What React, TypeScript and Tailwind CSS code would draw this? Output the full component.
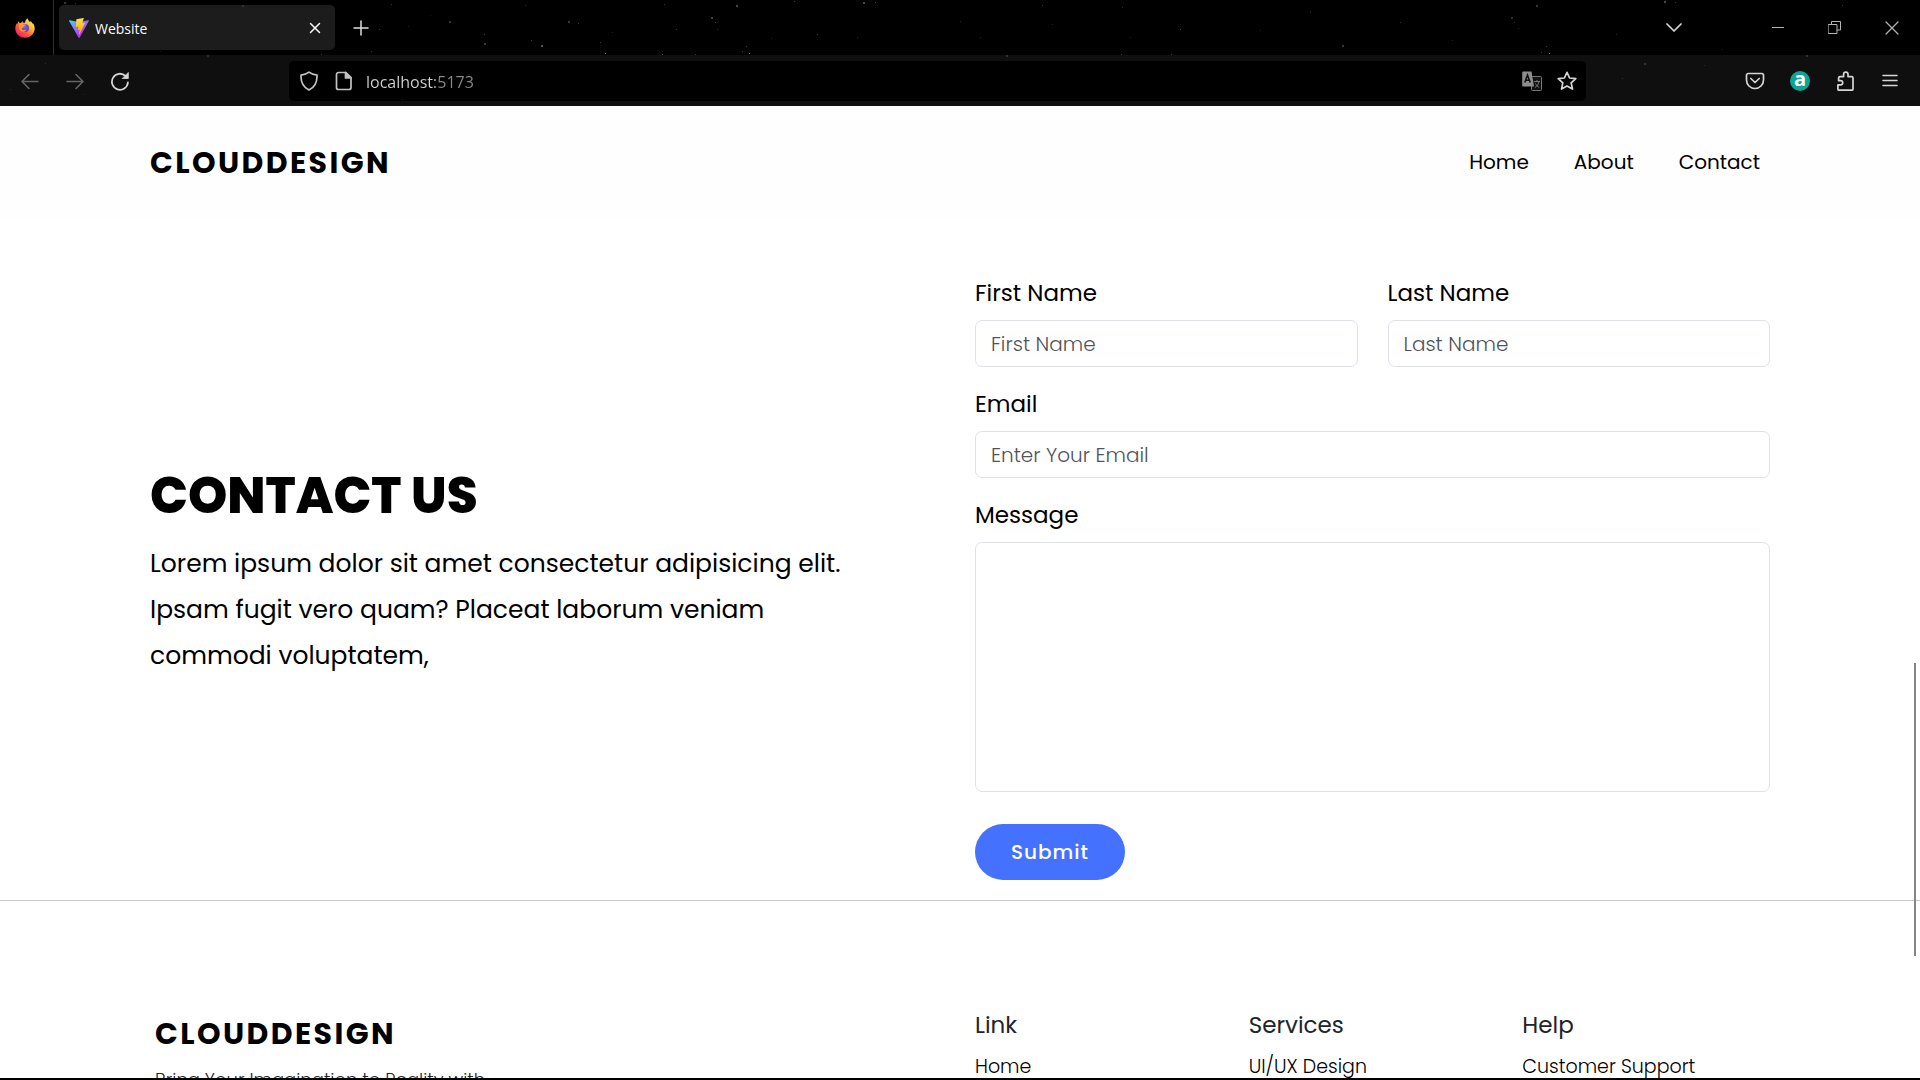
import type { ReactNode } from "react";

// x, y, size and opacity of each speck in the window theme
const stars: [number, number, number, number][] = [
  [64, 2, 2, 0.3], [75, 3, 1, 0.25], [160, 51, 1, 0.15], [207, 55, 2, 0.2], [242, 5, 2, 0.15], [321, 54, 1, 0.35],
  [379, 29, 1, 0.3], [391, 4, 1, 0.3], [408, 26, 1, 0.15], [430, 15, 1, 0.12], [449, 21, 2, 0.3], [371, 51, 1, 0.25],
  [45, 63, 1, 0.2], [10, 89, 1, 0.15], [84, 94, 1, 0.15], [402, 99, 1, 0.2],
  [484, 34, 1, 0.35], [484, 43, 2, 0.3], [525, 5, 1, 0.25], [531, 40, 1, 0.3], [541, 45, 2, 0.45], [568, 21, 2, 0.3],
  [578, 23, 1, 0.3], [600, 42, 1, 0.3], [605, 53, 1, 0.6], [612, 32, 1, 0.2], [662, 54, 1, 0.5], [664, 4, 1, 0.3],
  [676, 29, 1, 0.3], [695, 54, 1, 0.3], [711, 17, 2, 0.35], [715, 22, 1, 0.4], [717, 29, 1, 0.25], [736, 5, 2, 0.4],
  [742, 51, 1, 0.3], [746, 46, 1, 0.3], [749, 53, 1, 0.6], [771, 38, 1, 0.2], [794, 1, 1, 0.35], [817, 34, 1, 0.3],
  [857, 37, 1, 0.25], [863, 2, 2, 0.4], [875, 2, 1, 0.4], [960, 21, 1, 0.2], [980, 37, 1, 0.2], [1006, 55, 2, 0.2],
  [1042, 5, 1, 0.3], [1052, 24, 1, 0.2], [1122, 7, 1, 0.25], [1121, 54, 1, 0.4], [1130, 37, 1, 0.2], [1171, 54, 1, 0.3],
  [1180, 29, 1, 0.4], [1260, 30, 1, 0.2], [1310, 12, 1, 0.3], [1342, 45, 2, 0.3], [1400, 22, 1, 0.25], [1452, 40, 1, 0.2],
  [1511, 17, 2, 0.25], [1514, 22, 1, 0.3], [1518, 28, 1, 0.2], [1536, 5, 2, 0.3], [1541, 52, 1, 0.3], [1546, 46, 1, 0.35],
  [1549, 53, 1, 0.6], [1616, 34, 1, 0.2], [1664, 1, 2, 0.4], [1675, 2, 1, 0.3], [1722, 49, 1, 0.2], [1842, 5, 1, 0.3],
  [1644, 63, 2, 0.2], [1622, 78, 1, 0.2], [1806, 55, 2, 0.2], [1704, 65, 1, 0.15],
];

function Starfield() {
  return (
    <svg className="pointer-events-none absolute inset-0 h-full w-full" aria-hidden="true">
      {stars.map(([x, y, s, o], i) => (
        <rect key={i} x={x} y={y} width={s} height={s} fill="#b9b2ae" opacity={o} />
      ))}
    </svg>
  );
}

function FirefoxIcon() {
  return (
    <svg width="20" height="20" viewBox="0 0 20 20" aria-hidden="true">
      <defs>
        <linearGradient id="ffBody" x1="0.85" y1="0.1" x2="0.2" y2="0.95">
          <stop offset="0" stopColor="#fff14a" />
          <stop offset="0.35" stopColor="#ffb02e" />
          <stop offset="0.65" stopColor="#ff5a36" />
          <stop offset="1" stopColor="#f0187a" />
        </linearGradient>
        <radialGradient id="ffGlobe" cx="0.4" cy="0.3" r="0.8">
          <stop offset="0" stopColor="#9059ff" />
          <stop offset="1" stopColor="#5b3bb5" />
        </radialGradient>
      </defs>
      <path
        d="M12.6.2c.3 1.9 1.4 2.9 2.6 4 .2-.3.3-.9.2-1.4 1 .8 1.7 1.900 2.100 2.900.2-.1.300-.400.300-.7 1.300 1.800 1.900 3.500 1.900 5.500 0 5.100-4.200 9.300-9.600 9.300S.3 15.700.3 10.500c0-2 .5-3.700 1.500-5.200l.2 1.300c.3-1 .8-2.300 2-3.700 0 .7.100 1.300.400 1.800.5.300 1 .3 1.600.2.500-.9 1.200-1.400 2.100-1.800-.4.500-.5 1-.4 1.500l2.300.2C10.100 3.200 11 1.300 12.600.2z"
        fill="url(#ffBody)"
      />
      <circle cx="10" cy="10" r="4" fill="url(#ffGlobe)" />
      <path
        d="M4.200 6.300c1.500-.9 3-.6 4 .1l2.600.2c.1.800-1.200 1.300-1.900 1.700-.1.700-.8 1.200-1.600 1.400-1 .6-.8 2.300.9 2.500 1.200.1 1.900-.8 3.100-.3-.8 1.500-3.200 2.400-5 1.300-2.100-1.300-3-4.200-2.100-6.900z"
        fill="#ff9a2b"
      />
    </svg>
  );
}

function ViteIcon() {
  return (
    <svg width="20" height="20" viewBox="0 0 256 257" aria-hidden="true">
      <defs>
        <linearGradient id="viteA" x1="-.828%" x2="57.636%" y1="7.652%" y2="78.411%">
          <stop offset="0%" stopColor="#41D1FF" />
          <stop offset="100%" stopColor="#BD34FE" />
        </linearGradient>
        <linearGradient id="viteB" x1="43.376%" x2="50.316%" y1="2.242%" y2="89.03%">
          <stop offset="0%" stopColor="#FFEA83" />
          <stop offset="8.333%" stopColor="#FFDD35" />
          <stop offset="100%" stopColor="#FFA800" />
        </linearGradient>
      </defs>
      <path
        fill="url(#viteA)"
        d="M255.153 37.938L134.897 252.976c-2.483 4.44-8.862 4.466-11.382.048L.875 37.958c-2.746-4.814 1.371-10.646 6.827-9.67l120.385 21.517a6.537 6.537 0 0 0 2.322-.004l117.867-21.483c5.438-.991 9.574 4.796 6.877 9.62Z"
      />
      <path
        fill="url(#viteB)"
        d="M185.432.063L96.44 17.501a3.268 3.268 0 0 0-2.634 3.014l-5.474 92.456a3.268 3.268 0 0 0 3.997 3.378l24.777-5.718c2.318-.535 4.413 1.507 3.936 3.838l-7.361 36.047c-.495 2.426 1.782 4.5 4.151 3.78l15.304-4.649c2.372-.72 4.652 1.36 4.15 3.788l-11.698 56.621c-.732 3.542 3.979 5.473 5.943 2.437l1.313-2.028l72.516-144.72c1.215-2.423-.88-5.186-3.54-4.672l-25.505 4.922c-2.396.462-4.435-1.77-3.759-4.114l16.646-57.705c.677-2.35-1.37-4.583-3.769-4.113Z"
      />
    </svg>
  );
}

function Glyph({ children, size = 20, width = 1.6 }: { children: ReactNode; size?: number; width?: number }) {
  return (
    <svg
      width={size}
      height={size}
      viewBox={`0 0 ${size} ${size}`}
      fill="none"
      stroke="currentColor"
      strokeWidth={width}
      strokeLinecap="round"
      strokeLinejoin="round"
      aria-hidden="true"
    >
      {children}
    </svg>
  );
}

function BarButton({ label, children, dim = false }: { label: string; children: ReactNode; dim?: boolean }) {
  return (
    <button
      type="button"
      aria-label={label}
      className={`flex h-10 w-11 items-center justify-center ${dim ? "text-[#656565]" : "text-[#d6d6d6]"}`}
    >
      {children}
    </button>
  );
}

function WindowButton({ label, children }: { label: string; children: ReactNode }) {
  return (
    <button type="button" aria-label={label} className="flex h-[54px] w-[57px] items-center justify-center text-[#b4b4b4]">
      {children}
    </button>
  );
}

function BrowserChrome() {
  return (
    <header className="relative shrink-0 bg-black font-['Open_Sans',sans-serif]">
      <div className="flex h-[55px] items-center">
        <div className="flex h-full w-[54px] items-center border-r border-[#2e2e2e] pl-[15px]">
          <FirefoxIcon />
        </div>
        <div className="ml-[5px] flex h-[45px] w-[276px] items-center rounded-[5px] bg-[#1c1c1c] px-2.5 text-[#fbfbfe]">
          <ViteIcon />
          <span className="ml-1.5 flex-1 pt-0.5 text-[14px] leading-5">Website</span>
          <button type="button" aria-label="Close tab" className="flex size-5 items-center justify-center">
            <Glyph size={12} width={1.5}>
              <path d="M1.500 1.500 10.500 10.500M10.500 1.500 1.500 10.500" />
            </Glyph>
          </button>
        </div>
        <button type="button" aria-label="New tab" className="ml-1 flex size-11 items-center justify-center text-[#dedede]">
          <Glyph size={16} width={1.5}>
            <path d="M8 1v14M1 8h14" />
          </Glyph>
        </button>
        <div className="flex-1" />
        <button type="button" aria-label="List all tabs" className="mr-[53px] flex h-10 w-11 items-center justify-center text-[#d6d6d6]">
          <Glyph size={16} width={1.700}>
            <path d="M1 4 8 11 15 4" />
          </Glyph>
        </button>
        <WindowButton label="Minimize">
          <Glyph size={12} width={1}>
            <path d="M0 5.500h12" />
          </Glyph>
        </WindowButton>
        <WindowButton label="Restore">
          <Glyph size={13} width={1}>
            <path d="M.5 3.500h8.500v9H.5zM3.500 3.500v-3h9v8.500h-3.500" />
          </Glyph>
        </WindowButton>
        <WindowButton label="Close">
          <Glyph size={14} width={1.200}>
            <path d="M1 1 13 13M13 1 1 13" />
          </Glyph>
        </WindowButton>
      </div>

      <div className="flex h-[51px] items-center bg-[#0f0f0f] px-2">
        <div className="flex gap-px">
          <BarButton label="Back" dim>
            <Glyph>
              <path d="M18 10.500H2M9 3.500l-7 7 7 7" />
            </Glyph>
          </BarButton>
          <BarButton label="Forward" dim>
            <Glyph>
              <path d="M2 10.500h16M11 3.500l7 7-7 7" />
            </Glyph>
          </BarButton>
          <BarButton label="Reload">
            <Glyph width={1.800}>
              <path d="M17.900 11.500A8 8 0 1 1 15.500 5" />
              <path d="M18.300 1.800v5.700h-5.700z" fill="currentColor" strokeWidth={0.8} />
            </Glyph>
          </BarButton>
        </div>

        <div className="mx-[147px] flex h-10 flex-1 items-center rounded-[5px] bg-black pr-[9px] pl-2.5 text-[#c2c2c2]">
          <Glyph width={1.700}>
            <path d="M10 1.200c2.300 1.800 4.800 2.600 8 2.900.3 6.700-2.200 12-8 15-5.800-3-8.300-8.300-8-15 3.200-.3 5.700-1.100 8-2.900z" />
          </Glyph>
          <span className="ml-[15px]">
            <Glyph width={1.700}>
              <path d="M4.500 1.500h7.500l5 5v10a2 2 0 0 1-2 2H4.500a2 2 0 0 1-2-2v-13a2 2 0 0 1 2-2z" />
              <path d="M11.500 1.500v5.500H17z" fill="currentColor" />
            </Glyph>
          </span>
          <input
            aria-label="Address"
            defaultValue="localhost:5173"
            className="ml-3 h-8 min-w-0 flex-1 bg-[linear-gradient(90deg,#d4d4d4_69px,#8a8a8a_69px)] bg-clip-text pt-0.5 text-[16px] text-transparent outline-none"
          />
          <button type="button" aria-label="Translate page" className="flex items-center">
            <svg width="20" height="20" viewBox="0 0 20 20" aria-hidden="true">
              <rect x="9.500" y="5.500" width="10" height="14" rx="1" fill="#111" stroke="#777" />
              <path d="M12 10.500h6M15 9v1.500M13 16.500c2-1.200 3.500-3.200 4-6M13.500 12.500c.8 1.800 2 3 3.800 4" fill="none" stroke="#777" />
              <path d="M1 .5h8.500l2.500 15H1a.8.8 0 0 1-.8-.8V1.300A.8.800 0 0 1 1 .5z" fill="#8e8e8e" />
              <path d="M2.800 11.500 5.500 4l2.700 7.500M3.800 9.200h3.500" fill="none" stroke="#111" strokeWidth="1.600" />
            </svg>
          </button>
          <button type="button" aria-label="Bookmark this page" className="ml-[15px] flex items-center text-[#d6d6d6]">
            <Glyph width={1.700}>
              <path d="M10 1.300 12.600 7l6.200.7-4.600 4.200 1.300 6.200-5.500-3.100-5.500 3.100 1.300-6.200L1.200 7.700 7.400 7z" />
            </Glyph>
          </button>
        </div>

        <div className="flex gap-px">
          <BarButton label="Save to Pocket">
            <Glyph width={1.700}>
              <path d="M3.200 2.500h13.600a1.700 1.700 0 0 1 1.700 1.700V9a8.500 8.500 0 0 1-17 0V4.200a1.700 1.700 0 0 1 1.700-1.700z" />
              <path d="M5.800 7.500 10 11.500l4.200-4" />
            </Glyph>
          </BarButton>
          <BarButton label="Extension">
            <span className="flex size-5 items-center justify-center rounded-full bg-[#0aa596] pb-1 text-[20px] leading-none font-bold text-white">
              a
            </span>
          </BarButton>
          <BarButton label="Extensions">
            <Glyph width={1.700}>
              <path d="M4.200 19.200h12.500a1.300 1.300 0 0 0 1.300-1.300V7a1.400 1.400 0 0 0-1.400-1.400h-3.600V3.300a2.200 2.200 0 0 0-4.400 0v2.300H5A1.400 1.400 0 0 0 3.600 7v2.700h2a2.100 2.100 0 0 1 0 4.200H2.900v4a1.300 1.300 0 0 0 1.300 1.300z" />
            </Glyph>
          </BarButton>
          <BarButton label="Application menu">
            <Glyph size={16} width={1.500}>
              <path d="M1 2.500h14M1 7.500h14M1 12.500h14" />
            </Glyph>
          </BarButton>
        </div>
      </div>
      <Starfield />
    </header>
  );
}

const labelClass = "mb-2.5 block text-[23px] leading-[34px] text-black";
const fieldClass =
  "block w-full rounded-[7px] border border-[#dee2e6] bg-white px-[15px] text-[20px] font-light text-black outline-none placeholder:text-[#4f5459]";

function Field({ id, label, placeholder, type = "text" }: { id: string; label: string; placeholder: string; type?: string }) {
  return (
    <div>
      <label htmlFor={id} className={labelClass}>
        {label}
      </label>
      <input id={id} type={type} placeholder={placeholder} className={`${fieldClass} h-[47px]`} />
    </div>
  );
}

const columns = [
  { title: "Link", item: "Home" },
  { title: "Services", item: "UI/UX Design" },
  { title: "Help", item: "Customer Support" },
];

export default function App() {
  return (
    <div className="relative flex h-screen flex-col overflow-hidden border-b-2 border-black bg-white font-['Poppins','Inter',sans-serif] text-black">
      <BrowserChrome />
      <div className="min-h-0 flex-1 overflow-hidden">
        <nav className="flex h-28 items-center justify-between bg-[#fefefe] px-[150px]">
          <a href="#top" className="text-[30px] font-bold tracking-[0.08em]">
            CLOUDDESIGN
          </a>
          <ul className="flex gap-[45px] pr-2.5 text-[20px]">
            <li><a href="#home">Home</a></li>
            <li><a href="#about">About</a></li>
            <li><a href="#contact">Contact</a></li>
          </ul>
        </nav>

        <main className="grid grid-cols-2 items-center gap-[30px] border-b border-[#c8c8c8] px-[150px] pt-[58px] pb-5">
          <section className="pb-3">
            <h1 className="text-[50px] leading-[60px] font-extrabold">CONTACT US</h1>
            <p className="mt-[15px] max-w-[720px] text-[25px] leading-[46px]">
              Lorem ipsum dolor sit amet consectetur adipisicing elit. Ipsam fugit vero quam? Placeat laborum veniam commodi
              voluptatem,
            </p>
          </section>
          <form className="flex flex-col gap-5" onSubmit={(e) => e.preventDefault()}>
            <div className="grid grid-cols-2 gap-[30px]">
              <Field id="first" label="First Name" placeholder="First Name" />
              <Field id="last" label="Last Name" placeholder="Last Name" />
            </div>
            <Field id="email" label="Email" placeholder="Enter Your Email" type="email" />
            <div>
              <label htmlFor="message" className={labelClass}>
                Message
              </label>
              <textarea id="message" className={`${fieldClass} h-[250px] resize-none py-2`} />
            </div>
            <button
              type="submit"
              className="mt-3 h-14 w-[150px] rounded-full bg-[#4472ff] text-[20px] font-medium tracking-[1px] text-white"
            >
              Submit
            </button>
          </form>
        </main>

        <footer className="grid grid-cols-2 gap-[30px] px-[150px] pt-[106px]">
          <div className="pt-1 pl-[5px]">
            <a href="#top" className="block text-[30px] leading-[45px] font-bold tracking-[0.08em]">
              CLOUDDESIGN
            </a>
            <p className="mt-2.5 text-[18px] leading-[27px] font-light text-[#212529]">Bring Your Imagination to Reality with</p>
          </div>
          <div className="grid grid-cols-3 gap-[26px]">
            {columns.map((c) => (
              <section key={c.title}>
                <h2 className="text-[23px] leading-9 text-[#212529]">{c.title}</h2>
                <a href="#more" className="mt-2 block text-[19px] leading-8 font-light whitespace-nowrap">
                  {c.item}
                </a>
              </section>
            ))}
          </div>
        </footer>
      </div>
      <div className="absolute right-1 bottom-[122px] h-[293px] w-0.5 bg-[#858585]" />
    </div>
  );
}
